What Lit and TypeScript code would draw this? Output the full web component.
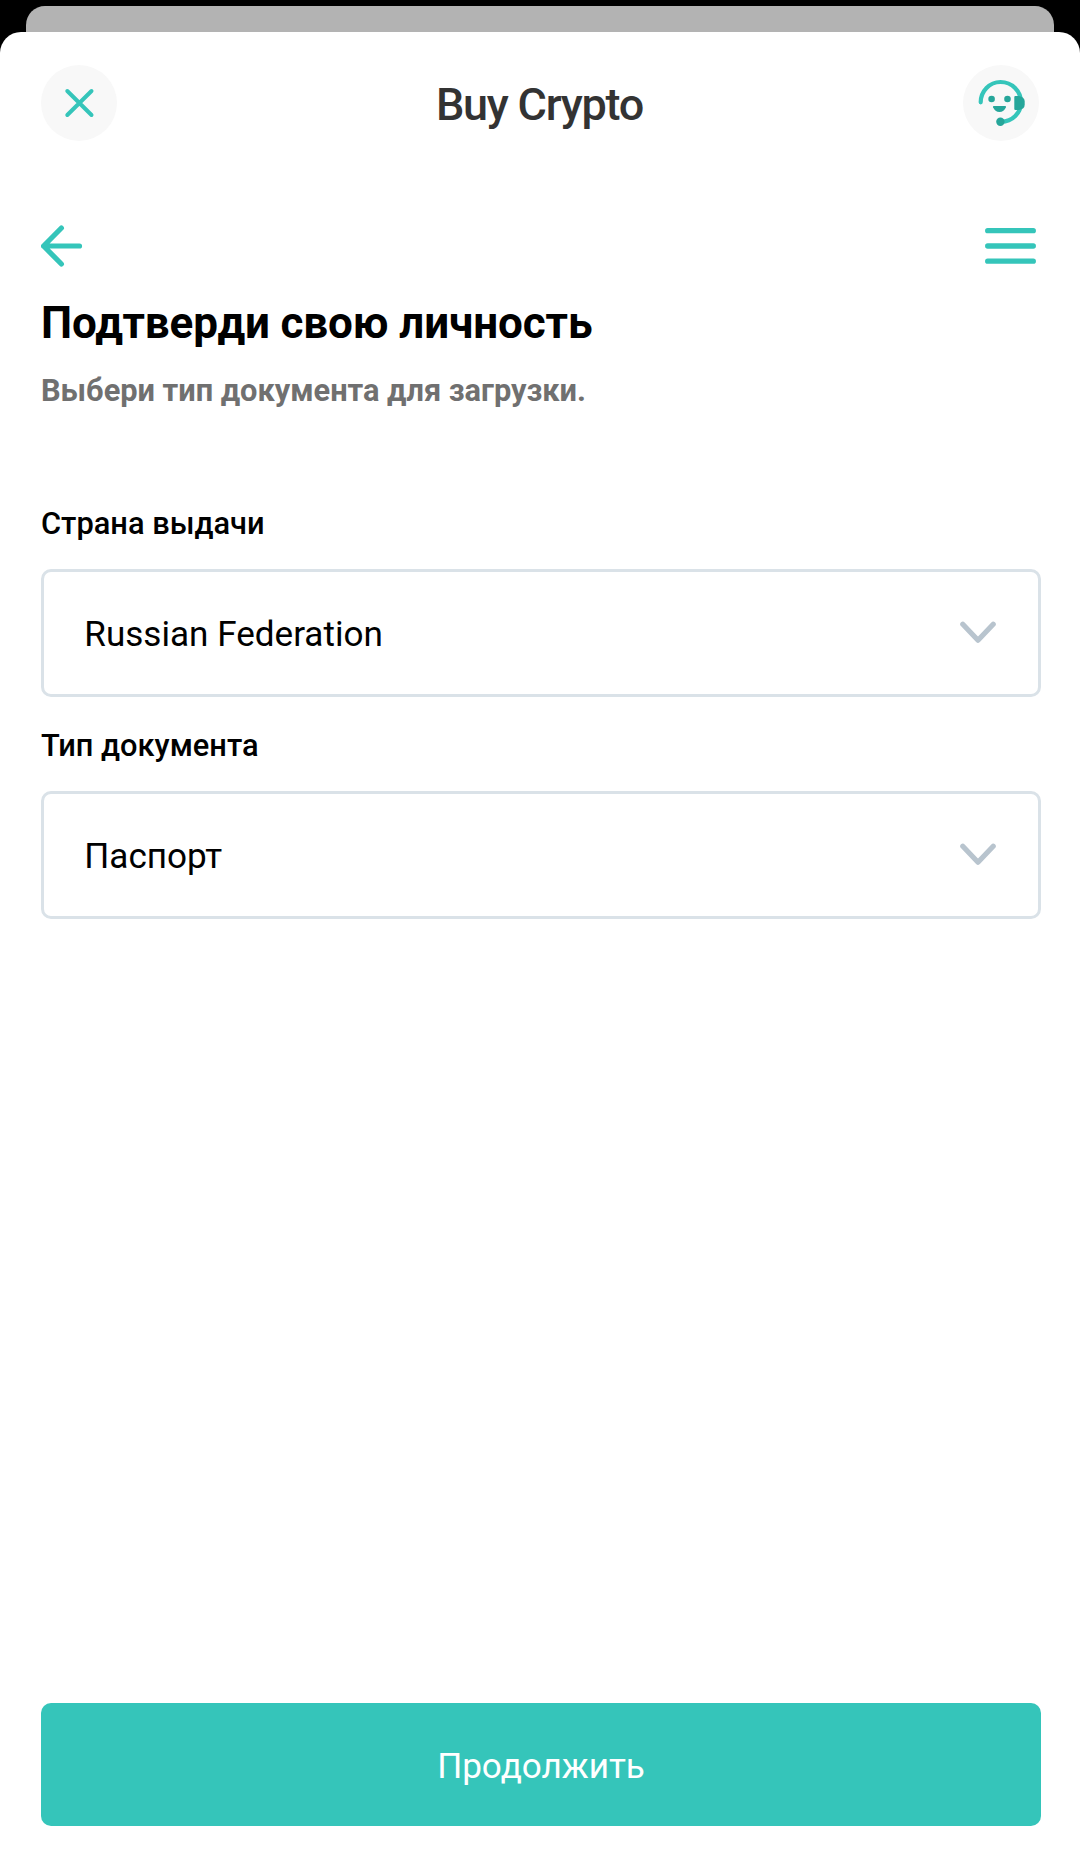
import { LitElement, html, css } from "lit";
import { customElement, property } from "lit/decorators.js";

@customElement("select-field")
class SelectField extends LitElement {
  @property() label = "";
  @property() value = "";

  static styles = css`
    :host { display: flex; flex-direction: column; gap: 25px; }
    .label { font-size: 30.8px; font-weight: 500; line-height: 40px; }
    .box {
      box-sizing: border-box; height: 128px; padding: 0 42px 0 40.3px;
      border: 3px solid #dae2e8; border-radius: 10px;
      display: flex; align-items: center; justify-content: space-between;
    }
    .value { padding-top: 2px; font-size: 35.1px; line-height: 44px; }
    .chevron { width: 36px; height: 24px; fill: none; stroke: #b8c4ce; stroke-width: 5.2; stroke-linecap: round; stroke-linejoin: round; }
  `;

  render() {
    return html`
      <div class="label">${this.label}</div>
      <div class="box">
        <span class="value">${this.value}</span>
        <svg class="chevron" viewBox="0 0 36 24"><path d="M2.8 3.2 18 19.2 33.2 3.2" /></svg>
      </div>
    `;
  }
}

@customElement("app-root")
class AppRoot extends LitElement {
  static styles = css`
    :host { display: block; font-family: Roboto, "Liberation Sans", sans-serif; color: #000; }
    .screen { height: 1865px; background: #000; display: flex; flex-direction: column; overflow: hidden; }
    .behind { flex: none; height: 46px; margin: 6px 26px -20px; border-radius: 19px 19px 0 0; background: #b3b3b3; }
    .sheet { flex: 1; display: flex; flex-direction: column; box-sizing: border-box; position: relative;
      background: #fff; border-radius: 21px 21px 0 0; padding: 33px 39px 39px 41px; }
    .header { display: flex; align-items: center; justify-content: space-between; padding-right: 2px; height: 76px; }
    .round { width: 76px; height: 76px; border-radius: 50%; background: #f8f8f8; }
    .round svg { display: block; width: 76px; height: 76px; }
    .title { margin: 0; padding: 3px 1px 0 0; font-size: 45px; font-weight: 500; line-height: 54px; letter-spacing: -1.25px; color: #333; }
    .line { fill: none; stroke: #35c5ba; stroke-linecap: round; stroke-linejoin: round; }
    .dark { fill: #26a69a; }
    .nav { display: flex; align-items: center; justify-content: space-between; height: 60px; margin-top: 75px; padding-right: 5px; }
    .arrow { width: 42px; height: 44px; }
    .menu { width: 51px; height: 38px; }
    .heading { margin: 21px 0 0; font-size: 44px; font-weight: 700; line-height: 52px; letter-spacing: -0.1px; }
    .sub { margin: 22px 0 0; font-size: 30.8px; font-weight: 700; line-height: 40px; letter-spacing: -0.03px; color: #707070; }
    .form { display: flex; flex-direction: column; gap: 29px; margin-top: 93px; }
    .go { margin: auto 0 0; height: 123px; border: 0; padding: 2px 0 0; border-radius: 10px; background: #35c5ba; color: #fff;
      font: 400 35.1px/44px Roboto, "Liberation Sans", sans-serif; letter-spacing: 0; }
  `;

  render() {
    return html`
      <div class="screen">
        <div class="behind"></div>
        <main class="sheet">
          <header class="header">
            <div class="round">
              <svg viewBox="0 0 76 76"><path class="line" stroke-width="4" d="M26.3 26 50.5 50M50.5 26 26.3 50" /></svg>
            </div>
            <h1 class="title">Buy Crypto</h1>
            <div class="round">
              <svg viewBox="0 0 76 76">
                <path class="line" stroke-width="4.2" d="M17.7 37.3A19.9 20.3 0 0 1 37.5 17C49 17 58 26 58 37.3 58 48 49.5 56.8 38 56.8" />
                <circle class="dark" cx="37.4" cy="56.8" r="4.2" />
                <circle class="dark" cx="28.6" cy="34" r="3.3" />
                <circle class="dark" cx="44.5" cy="34" r="3.3" />
                <path class="dark" d="M30.7 41H42.3Q43.3 41 42.9 42.2C41.7 45.3 39.5 47 36.5 47S31.3 45.3 30.1 42.2Q29.7 41 30.7 41Z" />
                <path class="dark" d="M52.3 31H56Q61.7 32 61.7 36.5V39.5Q61.7 44 56 45H52.3Q51.3 45 51.3 44V32Q51.3 31 52.3 31Z" />
              </svg>
            </div>
          </header>
          <nav class="nav">
            <svg class="arrow" viewBox="0 0 42 44"><path class="line" stroke-width="5.2" d="M38.5 22H2.6M20.4 4 2.6 22 20.4 40" /></svg>
            <svg class="menu" viewBox="0 0 51 38"><path class="line" stroke-width="5.3" d="M2.7 3.7H48.3M2.7 19H48.3M2.7 34.2H48.3" /></svg>
          </nav>
          <h2 class="heading">Подтверди свою личность</h2>
          <p class="sub">Выбери тип документа для загрузки.</p>
          <section class="form">
            <select-field label="Страна выдачи" value="Russian Federation"></select-field>
            <select-field label="Тип документа" value="Паспорт"></select-field>
          </section>
          <button class="go">Продолжить</button>
        </main>
      </div>
    `;
  }
}
